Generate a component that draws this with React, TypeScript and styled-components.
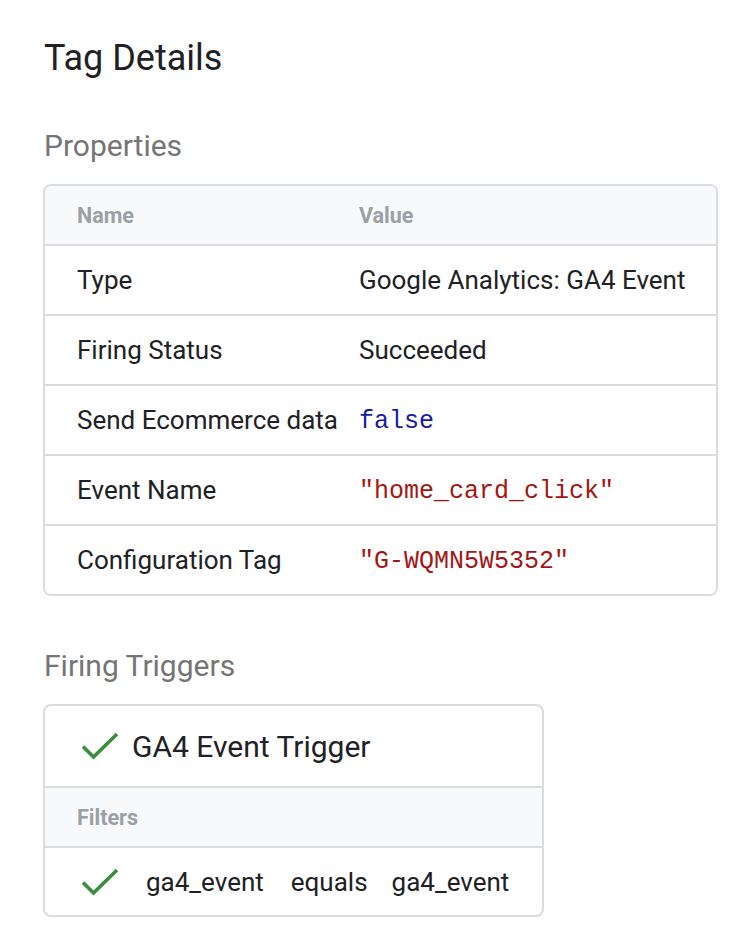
import styled, { createGlobalStyle } from "styled-components";

const GlobalStyle = createGlobalStyle`
  body {
    margin: 0;
    background: #ffffff;
    font-family: Roboto, "Liberation Sans", Arial, sans-serif;
    color: #202124;
  }
  * {
    box-sizing: border-box;
  }
`;

const Page = styled.div`
  padding: 34px 34px 10px 43px;
  width: 752px;
`;

const Title = styled.h1`
  margin: 0 0 0 1px;
  font-size: 36px;
  font-weight: 400;
  line-height: 48px;
  color: #202124;
`;

const SectionTitle = styled.h2<{ $top: number }>`
  margin: ${(p) => p.$top}px 0 20px 1px;
  font-size: 30px;
  font-weight: 400;
  line-height: 36px;
  color: #757575;
`;

const Card = styled.div<{ $width?: number }>`
  width: ${(p) => (p.$width ? `${p.$width}px` : "auto")};
  border: 2px solid #dadce0;
  border-radius: 8px;
  overflow: hidden;
  background: #fff;
`;

const Row = styled.div<{ $head?: boolean; $height: number }>`
  display: grid;
  grid-template-columns: 282px 1fr;
  align-items: center;
  height: ${(p) => p.$height}px;
  padding-left: 32px;
  background: ${(p) => (p.$head ? "#f8f9fa" : "#fff")};
  & + & {
    border-top: 2px solid #dadce0;
  }
`;

const HeadCell = styled.div`
  font-size: 21.5px;
  font-weight: 700;
  color: #9aa0a6;
`;

const Cell = styled.div`
  font-size: 26px;
  color: #202124;
  white-space: nowrap;
`;

const Code = styled.span<{ $kind: "bool" | "string" }>`
  font-family: "Liberation Mono", "Courier New", monospace;
  font-size: 25px;
  color: ${(p) => (p.$kind === "bool" ? "#1a1aa6" : "#a31515")};
`;

const TriggerHead = styled.div`
  display: flex;
  align-items: center;
  gap: 14px;
  height: 82px;
  padding-left: 37px;
  font-size: 30px;
  border-bottom: 2px solid #dadce0;
`;

const FilterLabel = styled.div`
  height: 60px;
  display: flex;
  align-items: center;
  padding-left: 32px;
  background: #f8f9fa;
  font-size: 21.5px;
  font-weight: 700;
  color: #9aa0a6;
  border-bottom: 2px solid #dadce0;
`;

const FilterRow = styled.div`
  display: flex;
  align-items: center;
  height: 67px;
  padding-left: 37px;
  font-size: 26px;
`;

const FilterText = styled.span<{ $gap: number }>`
  margin-left: ${(p) => p.$gap}px;
`;

const Check = () => (
  <svg width="36" height="28" viewBox="0 0 36 28" fill="none">
    <polyline
      points="1,14.5 11.5,25 35,2"
      stroke="#388e3c"
      strokeWidth="3.6"
      strokeLinecap="butt"
    />
  </svg>
);

const properties: { name: string; value: string; kind?: "bool" | "string" }[] = [
  { name: "Type", value: "Google Analytics: GA4 Event" },
  { name: "Firing Status", value: "Succeeded" },
  { name: "Send Ecommerce data", value: "false", kind: "bool" },
  { name: "Event Name", value: '"home_card_click"', kind: "string" },
  { name: "Configuration Tag", value: '"G-WQMN5W5352"', kind: "string" },
];

export default function App() {
  return (
    <>
      <GlobalStyle />
      <Page>
        <Title>Tag Details</Title>
        <SectionTitle $top={46}>Properties</SectionTitle>
        <Card>
          <Row $head $height={58}>
            <HeadCell>Name</HeadCell>
            <HeadCell>Value</HeadCell>
          </Row>
          {properties.map((p) => (
            <Row key={p.name} $height={70}>
              <Cell>{p.name}</Cell>
              <Cell>{p.kind ? <Code $kind={p.kind}>{p.value}</Code> : p.value}</Cell>
            </Row>
          ))}
        </Card>
        <SectionTitle $top={52}>Firing Triggers</SectionTitle>
        <Card $width={501}>
          <TriggerHead>
            <Check />
            GA4 Event Trigger
          </TriggerHead>
          <FilterLabel>Filters</FilterLabel>
          <FilterRow>
            <Check />
            <FilterText $gap={28}>ga4_event</FilterText>
            <FilterText $gap={27}>equals</FilterText>
            <FilterText $gap={24}>ga4_event</FilterText>
          </FilterRow>
        </Card>
      </Page>
    </>
  );
}
